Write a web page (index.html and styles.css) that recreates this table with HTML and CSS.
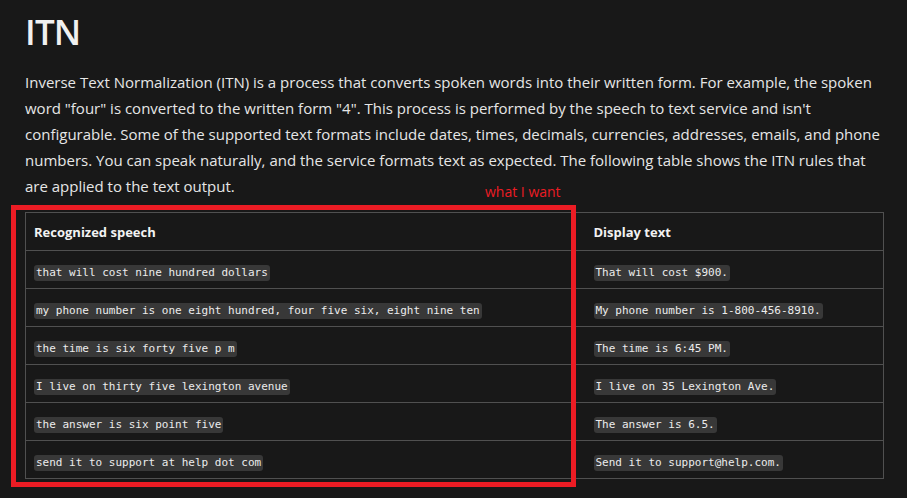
FILE: index.html
```html
<!DOCTYPE html>
<html lang="en">
<head>
<meta charset="utf-8">
<title>ITN</title>
<link rel="stylesheet" href="styles.css">
</head>
<body>
<main class="page">
  <h1 class="title">ITN</h1>
  <p class="intro">Inverse Text Normalization (ITN) is a process that converts spoken words into their written form. For example, the spoken word "four" is converted to the written form "4". This process is performed by the speech to text service and isn't configurable. Some of the supported text formats include dates, times, decimals, currencies, addresses, emails, and phone numbers. You can speak naturally, and the service formats text as expected. The following table shows the ITN rules that are applied to the text output.</p>
  <div class="table-wrap">
    <table class="itn">
      <colgroup><col class="col-speech"><col class="col-display"></colgroup>
      <thead>
        <tr><th>Recognized speech</th><th>Display text</th></tr>
      </thead>
      <tbody>
        <tr><td><code>that will cost nine hundred dollars</code></td><td><code>That will cost $900.</code></td></tr>
        <tr><td><code>my phone number is one eight hundred, four five six, eight nine ten</code></td><td><code>My phone number is 1-800-456-8910.</code></td></tr>
        <tr><td><code>the time is six forty five p m</code></td><td><code>The time is 6:45 PM.</code></td></tr>
        <tr><td><code>I live on thirty five lexington avenue</code></td><td><code>I live on 35 Lexington Ave.</code></td></tr>
        <tr><td><code>the answer is six point five</code></td><td><code>The answer is 6.5.</code></td></tr>
        <tr><td><code>send it to support at help dot com</code></td><td><code>Send it to support@help.com.</code></td></tr>
      </tbody>
    </table>
    <div class="annot-box"></div>
    <span class="annot-label">what I want</span>
  </div>
</main>
</body>
</html>
```
FILE: styles.css
```css
html, body {
  margin: 0;
  padding: 0;
  background: #181818;
}
body {
  color: #e6e6e6;
  font-family: "Open Sans", "Noto Sans", sans-serif;
}
.page {
  padding: 0 23px 20px 25px;
}
.title {
  margin: 0;
  padding-top: 9px;
  font-size: 35px;
  line-height: 46px;
  font-weight: 600;
  letter-spacing: -0.8px;
  color: #f0f0f0;
}
.intro {
  margin: 14px 0 0;
  font-size: 15px;
  line-height: 26px;
  color: #e6e6e6;
}
.table-wrap {
  position: relative;
  margin-top: 13px;
}
.itn {
  width: 100%;
  table-layout: fixed;
  border-collapse: collapse;
  border: 1px solid #505050;
}
.col-speech {
  width: 560px;
}
.itn th,
.itn td {
  border-top: 1px solid #505050;
  border-bottom: 1px solid #505050;
  height: 37px;
  padding: 0 8px;
  text-align: left;
  vertical-align: middle;
  white-space: nowrap;
}
.itn th {
  font-size: 13px;
  font-weight: 700;
  color: #f2f2f2;
}
.itn code {
  font-family: "DejaVu Sans Mono", "Liberation Mono", monospace;
  font-size: 11px;
  line-height: 16px;
  display: inline-block;
  padding: 0 2px;
  background: #383838;
  border-radius: 3px;
  color: #ececec;
}
.annot-box {
  position: absolute;
  left: -14px;
  top: -7px;
  width: 555px;
  height: 272px;
  border: 5px solid #ec1c24;
}
.annot-label {
  position: absolute;
  left: 460px;
  top: -26px;
  font-size: 14px;
  line-height: 12px;
  color: #ec1c24;
  font-family: "Open Sans", "Noto Sans", sans-serif;
}
```
